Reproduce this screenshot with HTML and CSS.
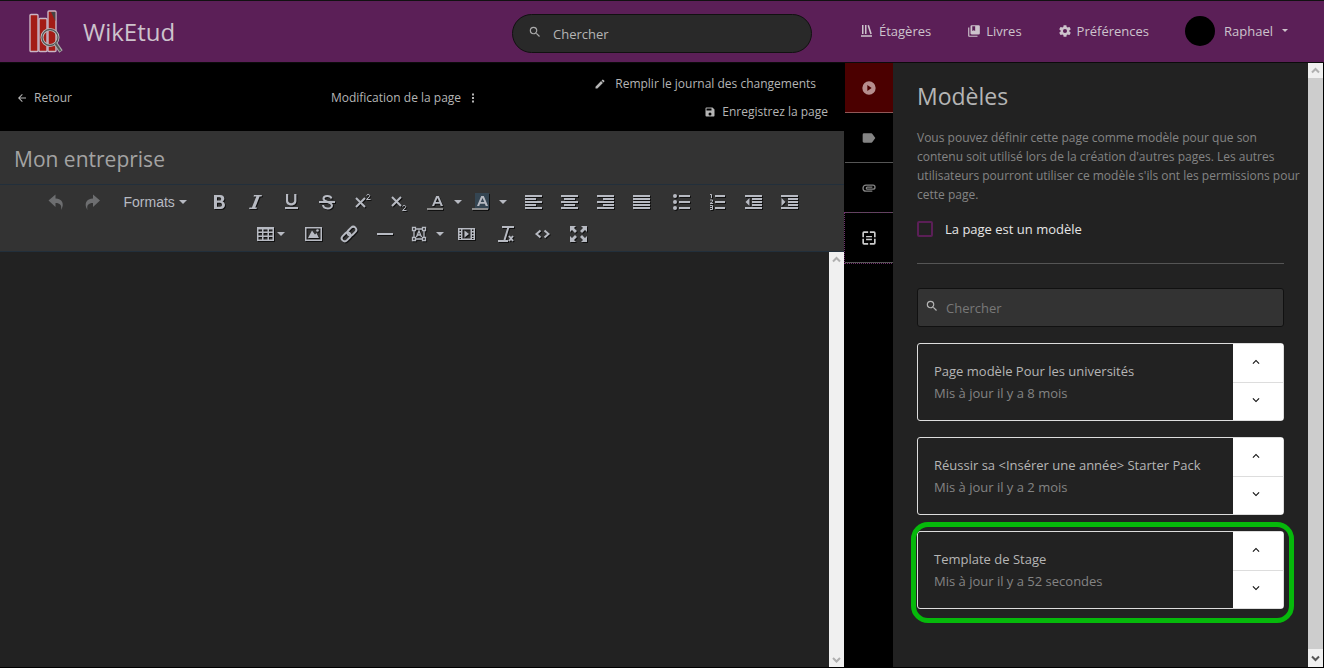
FILE: index.html
```html
<!DOCTYPE html>
<html lang="fr">
<head>
<meta charset="utf-8">
<title>WikEtud - Modification de la page</title>
<link rel="stylesheet" href="styles.css">
</head>
<body>
<svg class="defs" aria-hidden="true">
  <symbol id="search" viewBox="0 0 24 24"><path d="M15.5 14h-.79l-.28-.27A6.47 6.47 0 0 0 16 9.5 6.5 6.5 0 1 0 9.5 16c1.61 0 3.09-.59 4.23-1.57l.27.28v.79l5 4.99L20.49 19l-4.99-5zm-6 0C7.01 14 5 11.99 5 9.5S7.01 5 9.5 5 14 7.01 14 9.5 11.99 14 9.5 14z"/></symbol>
  <symbol id="up" viewBox="0 0 24 24"><path d="M7.41 15.41 12 10.83l4.59 4.58L18 14l-6-6-6 6z"/></symbol>
  <symbol id="down" viewBox="0 0 24 24"><path d="M7.41 8.59 12 13.17l4.59-4.58L18 10l-6 6-6-6z"/></symbol>
  <symbol id="bar-up" viewBox="0 0 15 15"><path d="M4 9.500 7.500 6 11 9.500" fill="none" stroke="currentColor" stroke-width="2"/></symbol>
  <symbol id="bar-down" viewBox="0 0 15 15"><path d="M4 6 7.500 9.500 11 6" fill="none" stroke="currentColor" stroke-width="2"/></symbol>
</svg>

<header class="header">
  <a class="brand" href="#">
    <svg class="logo" viewBox="0 0 36 44">
      <g fill="#a31c16" stroke="#c9b5c4" stroke-width="1.400">
        <rect x="2" y="4.500" width="8" height="37" rx="1"/>
        <rect x="11" y="8.500" width="8" height="33" rx="1"/>
        <rect x="20" y="1" width="8" height="40.500" rx="1"/>
      </g>
      <path d="M23 2h4.300v9z" fill="#444"/>
      <circle cx="22" cy="27.500" r="8" fill="none" stroke="#bbb" stroke-width="3"/>
      <circle cx="22" cy="27.500" r="8" fill="none" stroke="#555" stroke-width="1.300"/>
      <path d="m27.500 33.500 5.500 8" stroke="#aaa" stroke-width="4"/>
      <path d="m27.500 33.500 5 7.500" stroke="#555" stroke-width="2"/>
    </svg>
    <span>WikEtud</span>
  </a>
  <form class="site-search">
    <svg class="icon14"><use href="#search"/></svg>
    <input type="text" placeholder="Chercher" aria-label="Chercher">
  </form>
  <nav class="nav">
    <a href="#"><svg class="icon14" viewBox="0 0 14 14"><path d="M2 1h1.500v9H2zM5 1h1.500v9H5zM7.500 1.400 9 1l2.800 8.700-1.500.5zM1 11.300h11v1.400H1z"/></svg>Étagères</a>
    <a href="#"><svg class="icon14" viewBox="0 0 24 24"><path d="M4 6H2v14c0 1.100.9 2 2 2h14v-2H4zM20 2H8a2 2 0 0 0-2 2v12c0 1.100.9 2 2 2h12a2 2 0 0 0 2-2V4a2 2 0 0 0-2-2zM9 4h5v8l-2.500-1.500L9 12z"/></svg>Livres</a>
    <a href="#"><svg class="icon14" viewBox="0 0 24 24"><path d="M19.430 12.980c.04-.32.070-.64.070-.98s-.03-.66-.07-.98l2.110-1.650c.19-.15.240-.42.120-.64l-2-3.460c-.12-.22-.39-.3-.61-.22l-2.490 1c-.52-.4-1.080-.73-1.690-.98l-.38-2.650A.49.490 0 0 0 14 2h-4c-.25 0-.46.180-.49.420l-.38 2.650c-.61.250-1.170.590-1.690.98l-2.490-1c-.23-.09-.49 0-.61.220l-2 3.460c-.13.220-.07.490.12.640l2.110 1.650c-.04.320-.07.650-.07.980s.03.660.07.980l-2.110 1.650c-.19.150-.24.420-.12.640l2 3.460c.12.220.39.300.61.220l2.490-1c.52.400 1.080.730 1.690.980l.38 2.650c.03.240.24.420.49.420h4c.25 0 .46-.18.490-.42l.38-2.650c.61-.25 1.170-.59 1.690-.98l2.490 1c.23.090.49 0 .61-.22l2-3.460c.12-.22.070-.49-.12-.64zM12 15.500a3.500 3.500 0 1 1 0-7 3.500 3.500 0 0 1 0 7z"/></svg>Préférences</a>
    <button class="user" type="button"><span class="avatar"></span>Raphael<span class="caret"></span></button>
  </nav>
</header>

<main class="main">
  <section class="editor">
    <div class="actions">
      <a class="action back" href="#"><svg class="icon12" viewBox="0 0 24 24"><path d="M20 11H7.830l5.590-5.590L12 4l-8 8 8 8 1.410-1.410L7.830 13H20z"/></svg>Retour</a>
      <button class="action draft" type="button">Modification de la page<svg class="icon12" viewBox="0 0 24 24"><path d="M10 3h4v4h-4zm0 7h4v4h-4zm0 7h4v4h-4z"/></svg></button>
      <div class="save">
        <button class="action changelog" type="button"><svg class="icon12" viewBox="0 0 24 24"><path d="M3 17.250V21h3.750L17.810 9.940l-3.750-3.750zM20.710 7.040a1 1 0 0 0 0-1.410l-2.340-2.340a1 1 0 0 0-1.410 0l-1.830 1.830 3.750 3.750z"/></svg>Remplir le journal des changements</button>
        <button class="action" type="button"><svg class="icon12" viewBox="0 0 24 24"><path d="M17 3H5a2 2 0 0 0-2 2v14a2 2 0 0 0 2 2h14c1.100 0 2-.9 2-2V7zm-5 16a3 3 0 1 1 0-6 3 3 0 0 1 0 6zm3-10H5V5h10z"/></svg>Enregistrez la page</button>
      </div>
    </div>
    <input class="page-title" type="text" value="Mon entreprise" aria-label="Titre de la page">
    <div class="toolbar">
      <div class="tool-row">
        <div class="group">
          <button class="tool off" type="button" aria-label="Annuler"><svg viewBox="0 0 18 18"><path d="M8.500 1.500v4c6.500 0 9.500 5.500 5.500 11.500 1-5-1-7-5.500-7v4l-7-6.500z"/></svg></button>
          <button class="tool off" type="button" aria-label="Rétablir"><svg viewBox="0 0 18 18"><path d="M10 1.500v4C3.500 5.500.5 11 4.500 17c-1-5 1-7 5.500-7v4L17 7.500z"/></svg></button>
        </div>
        <button class="formats" type="button">Formats<span class="caret"></span></button>
        <div class="group color-end">
          <button class="tool" type="button" aria-label="Gras"><svg viewBox="0 0 18 18"><path fill-rule="evenodd" d="M4 2h6c5 0 5.500 5 2.500 6.500C16.500 10 15.500 16 10.500 16H4zm3 2.200v3.400h2.500c2.200 0 2.200-3.400 0-3.400zm0 5.500v4h3c2.700 0 2.700-4 0-4z"/></svg></button>
          <button class="tool" type="button" aria-label="Italique"><svg viewBox="0 0 18 18"><path d="M8 2h8l-.5 1.500h-1.900L9.300 14.500h1.700L10.500 16H3l.5-1.500h2.400L10.300 3.500H7.500z"/></svg></button>
          <button class="tool" type="button" aria-label="Souligné"><svg viewBox="0 0 18 18"><path d="M4 1h2.200v6.500c0 3.500 6 3.500 6 0V1h2.200v7c0 6-10.400 6-10.400 0zM3 14h13v2H3z"/></svg></button>
          <button class="tool" type="button" aria-label="Barré"><svg viewBox="0 0 18 18" class="line"><path d="M13.500 5.500C12.500 2 5.500 2 5.500 5.800 5.500 9.500 14 8.500 14 12.500 14 16.500 5.500 16.500 5 12M1 9h16"/></svg></button>
          <button class="tool" type="button" aria-label="Exposant"><svg viewBox="0 0 18 18" class="line"><path d="m2 5 9 9M11 5l-9 9"/><path class="thin" d="M12.500 2.500c1-2 4-1 3 1l-3 3h4"/></svg></button>
          <button class="tool" type="button" aria-label="Indice"><svg viewBox="0 0 18 18" class="line"><path d="m2 4 9 9M11 4l-9 9"/><path class="thin" d="M12.500 13.500c1-2 4-1 3 1l-3 3h4"/></svg></button>
          <button class="split" type="button" aria-label="Couleur du texte"><svg viewBox="0 0 18 18"><path fill-rule="evenodd" d="M6 13 10.200 3h2.600L17 13h-2.300l-.8-2.200H9L8.200 13zm3.700-4h3.600l-1.800-4z"/><path class="swatch" d="M1 15h16v2H1z"/></svg><span class="caret"></span></button>
          <button class="split" type="button" aria-label="Couleur de fond"><svg viewBox="0 0 18 18"><path fill="#344552" d="M4 0h14v16H4z"/><path fill-rule="evenodd" d="M6 13 10.200 3h2.600L17 13h-2.300l-.8-2.200H9L8.200 13zm3.700-4h3.600l-1.800-4z"/><path class="swatch" d="M1 15h16v2H1z"/></svg><span class="caret"></span></button>
        </div>
        <div class="group">
          <button class="tool" type="button" aria-label="Aligner à gauche"><svg viewBox="0 0 18 18"><path d="M1 2h17v2H1zm0 3h11v2H1zm0 3h17v2H1zm0 3h11v2H1zm0 3h17v2H1z"/></svg></button>
          <button class="tool" type="button" aria-label="Centrer"><svg viewBox="0 0 18 18"><path d="M1 2h17v2H1zm3 3h11v2H4zM1 8h17v2H1zm3 3h11v2H4zm-3 3h17v2H1z"/></svg></button>
          <button class="tool" type="button" aria-label="Aligner à droite"><svg viewBox="0 0 18 18"><path d="M1 2h17v2H1zm6 3h11v2H7zM1 8h17v2H1zm6 3h11v2H7zm-6 3h17v2H1z"/></svg></button>
          <button class="tool" type="button" aria-label="Justifier"><svg viewBox="0 0 18 18"><path d="M1 2h17v2H1zm0 3h17v2H1zm0 3h17v2H1zm0 3h17v2H1zm0 3h17v2H1z"/></svg></button>
        </div>
        <div class="group">
          <button class="tool" type="button" aria-label="Liste à puces"><svg viewBox="0 0 18 18"><path d="M7 2h11v2H7zm0 6h11v2H7zm0 6h11v2H7z"/><circle cx="3" cy="3" r="2"/><circle cx="3" cy="9" r="2"/><circle cx="3" cy="15" r="2"/></svg></button>
          <button class="tool" type="button" aria-label="Liste numérotée"><svg viewBox="0 0 18 18"><path d="M7 2h10v2H7zm0 6h10v2H7zm0 6h10v2H7z"/><path class="digits" d="M2 1.500h1.500V5M2 7h2.500v1.500L2 10.500h3M2 12.500h2.500v4H2m0-2h2.500"/></svg></button>
          <button class="tool" type="button" aria-label="Réduire le retrait"><svg viewBox="0 0 18 18"><path d="M1 2h17v2H1zm7 3h10v2H8zm0 3h10v2H8zm0 3h10v2H8zm-7 3h17v2H1zM5.500 5v8L1.500 9z"/></svg></button>
          <button class="tool" type="button" aria-label="Augmenter le retrait"><svg viewBox="0 0 18 18"><path d="M1 2h17v2H1zm7 3h10v2H8zm0 3h10v2H8zm0 3h10v2H8zm-7 3h17v2H1zM1.500 5v8l4-4z"/></svg></button>
        </div>
      </div>
      <div class="tool-row">
        <div class="group">
          <button class="split table" type="button" aria-label="Tableau"><svg viewBox="0 0 18 18"><path fill-rule="evenodd" d="M0 2h17v14H0zm1.500 2.500v2h3.500v-2zm5 0v2h4v-2zm5.500 0v2h3.500v-2zM1.500 8v2.500H5V8zm5 0v2.500h4V8zM12 8v2.500h3.500V8zM1.500 12v2.500H5V12zm5 0v2.500h4V12zm5.500 0v2.500h3.500V12z"/></svg><span class="caret"></span></button>
        </div>
        <div class="group">
          <button class="tool" type="button" aria-label="Image"><svg viewBox="0 0 18 18"><path fill-rule="evenodd" d="M1 2h17v14H1zm1.500 1.500v11h14v-11z"/><path d="m4 13 4-7.500 3 4 1.500-1.500L15 13z"/><circle cx="13.500" cy="5.500" r="1.300"/></svg></button>
          <button class="tool" type="button" aria-label="Lien"><svg viewBox="0 0 18 18" class="line"><g transform="rotate(-45 9 9)"><rect x="0" y="6" width="10" height="6" rx="3"/><rect x="8" y="6" width="10" height="6" rx="3"/></g></svg></button>
          <button class="tool" type="button" aria-label="Ligne horizontale"><svg viewBox="0 0 18 18"><path d="M1 8h16v2H1z"/></svg></button>
          <button class="split drawing" type="button" aria-label="Dessin"><svg viewBox="0 0 18 18" class="line"><path class="frame" d="M2.500 2.500h3v3h-3zm10 0h3v3h-3zm-10 10h3v3h-3zm10 0h3v3h-3zM5.500 4h7M5.500 14h7M4 5.500v7m10-7v7M6.500 12 9 6l2.500 6M7.500 10h3"/></svg><span class="caret"></span></button>
          <button class="tool" type="button" aria-label="Média"><svg viewBox="0 0 18 18"><path fill-rule="evenodd" d="M1 3h17v12H1zm1.500 1.500V6H4V4.500zm0 3V9H4V7.500zm0 3V12h1.500v-1.500zm0 2.500v1H4v-1zM5.500 4.500v9h8v-9zm9.500 0V6h1.500V4.500zm0 3V9h1.500V7.500zm0 3V12h1.500v-1.500zm0 2.500v1h1.500v-1z"/><path d="m7.500 5.500 4.500 3.500-4.500 3.500z"/></svg></button>
        </div>
        <div class="group">
          <button class="tool" type="button" aria-label="Effacer la mise en forme"><svg viewBox="0 0 18 18" class="line"><path d="M5 2h12M11.500 2 7.500 15M1 16h10"/><path d="m12 11 4 5m0-5-4 5"/></svg></button>
          <button class="tool" type="button" aria-label="Code source"><svg viewBox="0 0 18 18" class="line"><path d="M7.500 5.500 3.500 9l4 3.500M11.500 5.500l4 3.500-4 3.500"/></svg></button>
          <button class="tool" type="button" aria-label="Plein écran"><svg viewBox="0 0 18 18"><path d="M1 1h6L5 3l3 3-2 2-3-3-2 2zM18 1h-6l2 2-3 3 2 2 3-3 2 2zM1 17h6l-2-2 3-3-2-2-3 3-2-2zM18 17h-6l2-2-3-3 2-2 3 3 2-2z"/></svg></button>
        </div>
      </div>
    </div>
    <div class="writing">
      <textarea aria-label="Contenu de la page"></textarea>
      <div class="scrollbar idle"><svg><use href="#bar-up"/></svg><svg><use href="#bar-down"/></svg></div>
    </div>
  </section>

  <aside class="sidebar">
    <div class="tabs">
      <button class="tab toggle" type="button" aria-label="Ouvrir le panneau"><svg viewBox="0 0 24 24"><path fill-rule="evenodd" d="M12 4a8 8 0 1 0 0 16 8 8 0 0 0 0-16zm-2 4.500 5.200 3.500L10 15.500z"/></svg></button>
      <button class="tab" type="button" aria-label="Étiquettes"><svg viewBox="0 0 24 24"><path d="M17.630 5.840A2 2 0 0 0 16 5H5a2 2 0 0 0-2 2v10c0 1.100.9 2 2 2h11c.67 0 1.270-.33 1.630-.84L22 12z" transform="matrix(.8 0 0 .8 2 2.400)"/></svg></button>
      <button class="tab" type="button" aria-label="Fichiers joints"><svg viewBox="0 0 24 24"><path d="M2 12.500C2 9.460 4.460 7 7.500 7H18a4 4 0 0 1 0 8H9.500a2.500 2.500 0 0 1 0-5H17v2H9.410c-.55 0-.55 1 0 1H18a2 2 0 0 0 0-4H7.500a3.500 3.500 0 0 0 0 7H17v2H7.500A5.500 5.500 0 0 1 2 12.500z" transform="matrix(.8 0 0 .8 2.400 2.200)"/></svg></button>
      <button class="tab active" type="button" aria-label="Modèles"><svg viewBox="0 0 24 24"><path d="M4 11V6q0-2 2-2h5v2H6v5zM13 4h5q2 0 2 2v5h-2V6h-5zM20 13v5q0 2-2 2h-5v-2h5v-5zM11 20H6q-2 0-2-2v-5h2v5h5zM8.500 9.500h7v1.700h-7zm0 3.500h7v1.700h-7z"/></svg></button>
    </div>
    <div class="panel">
      <h1>Modèles</h1>
      <p class="intro">Vous pouvez définir cette page comme modèle pour que son contenu soit utilisé lors de la création d'autres pages. Les autres utilisateurs pourront utiliser ce modèle s'ils ont les permissions pour cette page.</p>
      <label class="check"><input type="checkbox">La page est un modèle</label>
      <hr>
      <form class="find">
        <svg class="icon14"><use href="#search"/></svg>
        <input type="text" placeholder="Chercher" aria-label="Chercher un modèle">
      </form>
      <div class="cards">
        <article class="card">
          <div class="card-text"><div>Page modèle Pour les universités</div><div class="muted">Mis à jour il y a 8 mois</div></div>
          <div class="card-buttons"><button type="button" aria-label="Ajouter avant"><svg><use href="#up"/></svg></button><button type="button" aria-label="Ajouter après"><svg><use href="#down"/></svg></button></div>
        </article>
        <article class="card">
          <div class="card-text"><div>Réussir sa &lt;Insérer une année&gt; Starter Pack</div><div class="muted">Mis à jour il y a 2 mois</div></div>
          <div class="card-buttons"><button type="button" aria-label="Ajouter avant"><svg><use href="#up"/></svg></button><button type="button" aria-label="Ajouter après"><svg><use href="#down"/></svg></button></div>
        </article>
        <article class="card highlighted">
          <div class="card-text"><div>Template de Stage</div><div class="muted">Mis à jour il y a 52 secondes</div></div>
          <div class="card-buttons"><button type="button" aria-label="Ajouter avant"><svg><use href="#up"/></svg></button><button type="button" aria-label="Ajouter après"><svg><use href="#down"/></svg></button></div>
        </article>
      </div>
    </div>
    <div class="scrollbar"><svg><use href="#bar-up"/></svg><div class="thumb"></div><svg class="dark"><use href="#bar-down"/></svg></div>
  </aside>
</main>
</body>
</html>
```
FILE: styles.css
```css
* { box-sizing: border-box; }

body {
  margin: 0;
  height: 100vh;
  display: flex;
  flex-direction: column;
  overflow: hidden;
  background: #000;
  color: #b5b5b5;
  font: 13px/22px "Open Sans", "Noto Sans", sans-serif;
}

button, input, textarea {
  margin: 0;
  padding: 0;
  border: 0;
  background: none;
  color: inherit;
  font: inherit;
  outline: 0;
}

a { color: inherit; text-decoration: none; }
svg { display: block; fill: currentColor; flex: none; }
.defs { position: absolute; width: 0; height: 0; }
.icon14 { width: 14px; height: 14px; }
.icon12 { width: 12px; height: 12px; }

.caret {
  border: 4px solid transparent;
  border-top-color: currentColor;
  border-bottom: 0;
}

/* Header */
.header {
  display: grid;
  grid-template-columns: 1fr 300px 1fr;
  align-items: center;
  height: 63px;
  border-top: 1px solid #111;
  border-bottom: 1px solid #0b0b0b;
  background: #5b1f57;
  color: #cdc3cc;
}

.brand {
  display: flex;
  align-items: center;
  gap: 19px;
  padding-left: 28px;
  font-size: 24px;
  line-height: 32px;
}
.logo { width: 36px; height: 44px; }

.site-search {
  display: flex;
  align-items: center;
  gap: 11px;
  height: 39px;
  margin-top: 4px;
  padding: 0 15px;
  border: 1px solid #111;
  border-radius: 20px;
  background: #292929;
  color: #aaa;
}
.site-search svg { margin-bottom: 4px; }
.site-search input { flex: 1; min-width: 0; }
.site-search input::placeholder { color: #b5b5b5; opacity: 1; }

.nav {
  display: flex;
  align-items: center;
  justify-content: flex-end;
  gap: 36px;
  padding: 0 36px 2px 0;
  font-weight: 500;
}
.nav a { display: flex; align-items: center; gap: 5px; }
.user { display: flex; align-items: center; gap: 9px; }
.avatar { width: 30px; height: 30px; border-radius: 50%; background: #000; }
.user .caret { border-width: 3px 3px 0; }

/* Editor */
.main {
  display: flex;
  flex: 1;
  min-height: 0;
  padding: 0 1px 1px 0;
}
.editor {
  display: flex;
  flex: 1;
  flex-direction: column;
  min-width: 0;
  padding-right: 1px;
}
.actions {
  display: grid;
  grid-template-columns: 1fr auto 1fr;
  align-items: center;
  height: 68px;
  padding: 2px 16px 0;
  font-size: 12px;
}
.action { display: flex; align-items: center; gap: 6px; line-height: 28px; }
.draft { margin-right: 34px; }
.save { display: flex; flex-direction: column; align-items: flex-end; }
.changelog { gap: 9px; margin-right: 12px; }

.page-title {
  height: 54px;
  padding: 2px 14px 0;
  border-bottom: 1px solid #222f3b;
  background: #333;
  color: #a3a3a3;
  font-size: 21px;
}

.toolbar {
  padding: 1px 0;
  border-bottom: 1px solid #222f3b;
  background: #333;
  color: #b7bac2;
}
.tool-row { display: flex; justify-content: center; gap: 4px; height: 32px; }
.group { display: flex; }
.color-end { padding-right: 4px; }
.tool {
  display: flex;
  align-items: center;
  justify-content: center;
  width: 36px;
}
.toolbar svg { width: 18px; height: 18px; filter: drop-shadow(1px 1px 0 #111); }
.off { color: #6d6e70; }
.toolbar .off svg { filter: none; }
.line { fill: none; stroke: currentColor; stroke-width: 2; }
.thin, .digits { fill: none; stroke: currentColor; stroke-width: 1; }
.frame { stroke-width: 1.3; }
.swatch { fill: #8c8c8c; }
.split { display: flex; align-items: center; gap: 10px; width: 45px; padding-left: 9px; }
.drawing { gap: 8px; padding-left: 7px; }
.table { gap: 2px; width: 42px; padding-left: 8px; }
.formats {
  display: flex;
  align-items: center;
  gap: 4px;
  width: 83px;
  padding-left: 10px;
  font: 14px/20px "Liberation Sans", Arial, sans-serif;
}

.writing { display: flex; flex: 1; min-height: 0; background: #222; }
.writing textarea { flex: 1; min-width: 0; padding: 12px; resize: none; }

.scrollbar {
  display: flex;
  flex-direction: column;
  justify-content: space-between;
  flex: none;
  width: 15px;
  background: #f0f0f0;
  color: #b0b0b0;
}
.scrollbar svg { width: 15px; height: 15px; }
.scrollbar .dark { height: 18px; color: #555; }
.thumb { flex: 1; background: #cdcdcd; }

/* Sidebar */
.sidebar { display: flex; flex: none; width: 478px; }
.tabs { display: flex; flex-direction: column; width: 48px; }
.tab {
  display: flex;
  align-items: center;
  justify-content: center;
  height: 50px;
  border-bottom: 1px solid #555;
  color: #848484;
}
.tab svg { width: 20px; height: 20px; }
.toggle { border-color: #905858; background: #4b0000; color: #b68e8e; }
.active { outline: 1px dotted #70306c; color: #ccc; }

.panel { flex: 1; min-width: 0; padding: 17px 24px 24px; background: #222; }
h1 { margin: 0 0 16px; font-size: 23px; line-height: 32px; font-weight: 400; }
.intro { margin: 0 -20px 14px 0; color: #848484; font-size: 12px; line-height: 19px; }
.check { display: flex; align-items: center; gap: 12px; color: #e6e6e6; }
.check input {
  appearance: none;
  width: 16px;
  height: 16px;
  border: 2px solid #5b1f57;
  border-radius: 2px;
}
hr { margin: 23px 0 24px; border: 0; border-top: 1px solid #555; }

.find {
  display: flex;
  align-items: center;
  gap: 7px;
  height: 39px;
  margin-bottom: 16px;
  padding: 0 7px;
  border: 1px solid #111;
  border-radius: 3px;
  background: #333;
}
.find svg { margin-bottom: 4px; }
.find input { flex: 1; min-width: 0; }
.find input::placeholder { color: #787878; opacity: 1; }

.cards { display: grid; gap: 16px; }
.card {
  position: relative;
  display: flex;
  min-height: 78px;
  border: 1px solid #ddd;
  border-radius: 3px;
}
.card-text { flex: 1; padding: 16px; }
.muted { color: #848484; }
.card-buttons {
  display: grid;
  width: 50px;
  background: #fff;
  color: #111;
}
.card-buttons button { display: grid; place-items: center; padding: 0 4px 2px 0; }
.card-buttons button + button { border-top: 1px solid #ddd; }
.card-buttons svg { width: 14px; height: 14px; }

.highlighted::after {
  content: "";
  position: absolute;
  inset: -10px -11px -15px -7px;
  border: 5px solid #06b90b;
  border-radius: 17px;
}
```
